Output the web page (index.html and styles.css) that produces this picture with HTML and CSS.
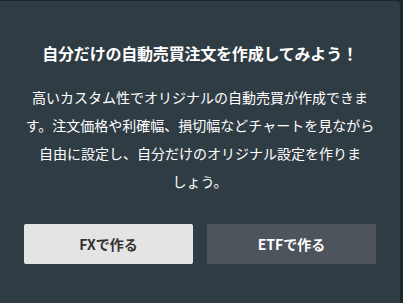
FILE: index.html
```html
<!DOCTYPE html>
<html lang="ja">
<head>
  <meta charset="UTF-8">
  <meta name="viewport" content="width=device-width, initial-scale=1.0">
  <title>自動売買注文</title>
  <link rel="stylesheet" href="styles.css">
</head>
<body>
<!-- Modal Panel -->
<div class="modal">
    <div class="modal-title">自分だけの自動売買注文を作成してみよう！</div>
    <p class="modal-text">高いカスタム性でオリジナルの自動売買が作成できま<br>す。注文価格や利確幅、損切幅などチャートを見ながら<br>自由に設定し、自分だけのオリジナル設定を作りま<br>しょう。</p>

    <!-- Action Buttons -->
    <div class="modal-buttons">
        <button class="btn btn-light">FXで作る</button>
        <button class="btn btn-dark">ETFで作る</button>
    </div>
</div>
</body>
</html>
```

FILE: styles.css
```css
/* Page background */
html, body {
  margin: 0;
  padding: 0;
  height: 100%;
  overflow: hidden;
}

body {
  background-color: #1d282e;
  font-family: "Noto Sans CJK JP", "Noto Sans", sans-serif;
}

/* Modal Panel */
.modal {
  width: 400px;
  height: 302px;
  margin-top: 1px;
  padding: 40px 25px 0 25px;
  box-sizing: border-box;
  background-color: #2f3c44;
  border-radius: 0 4px 0 0;
  color: #ffffff;
  text-align: center;
}

.modal-title {
  font-size: 16px;
  font-weight: bold;
  line-height: 24px;
  letter-spacing: -0.2px;
}

.modal-text {
  margin: 18px -5px 0 -5px;
  font-size: 14px;
  line-height: 28px;
}

/* Action Buttons */
.modal-buttons {
  display: flex;
  gap: 14px;
  margin: 29px -1px 0 -1px;
}

.btn {
  flex: 1;
  height: 40px;
  border: none;
  border-radius: 2px;
  font-family: "Noto Sans CJK JP", "Noto Sans", sans-serif;
  font-size: 14px;
  font-weight: bold;
  cursor: pointer;
}

.btn-light {
  background-color: #e4e4e4;
  color: #333333;
}

.btn-dark {
  background-color: #4d545b;
  color: #ffffff;
}
```
